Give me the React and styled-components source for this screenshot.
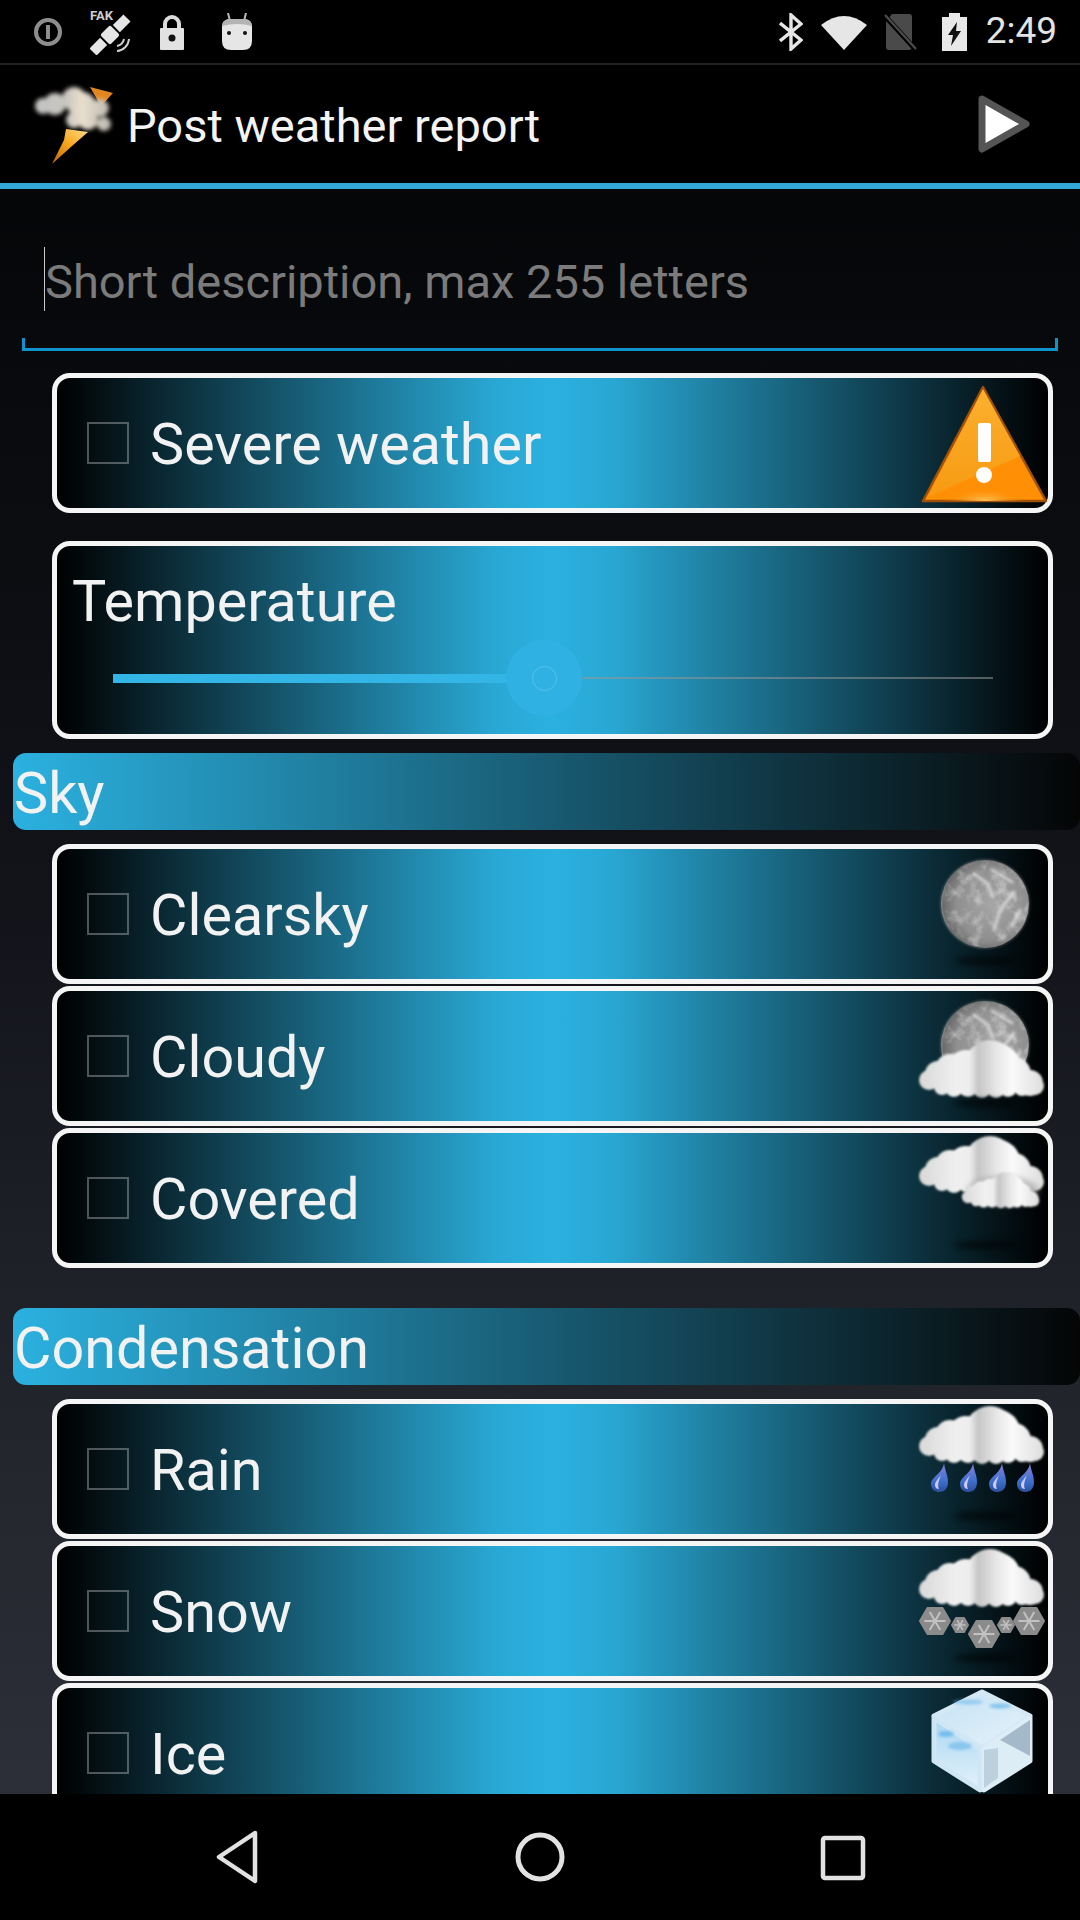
import React from "react";
import styled, { createGlobalStyle } from "styled-components";

const GlobalStyle = createGlobalStyle`
  html, body {
    margin: 0;
    padding: 0;
    background: #000;
  }
  * {
    box-sizing: border-box;
  }
`;

const Screen = styled.div`
  width: 1080px;
  height: 1920px;
  display: flex;
  flex-direction: column;
  overflow: hidden;
  background: #000;
  font-family: Roboto, "Liberation Sans", sans-serif;
  color: #f2f2f2;
`;

const StatusBar = styled.div`
  height: 65px;
  flex: none;
  display: flex;
  justify-content: space-between;
  align-items: flex-start;
  padding: 0 23px 0 33px;
  border-bottom: 2px solid #222;
`;

const StatusGroup = styled.div`
  display: flex;
  align-items: flex-start;
`;

const StatusSlot = styled.div`
  width: ${(p) => p.$w}px;
  height: 63px;
  display: flex;
  align-items: center;
`;

const Clock = styled.span`
  font-size: 37px;
  line-height: 62px;
  color: #e4e4e4;
`;

const AppBar = styled.div`
  height: 124px;
  flex: none;
  display: flex;
  align-items: center;
  padding: 0 48px 0 28px;
  border-bottom: 6px solid #34a7d9;
`;

const AppTitle = styled.h1`
  flex: 1;
  margin: 0 0 0 9px;
  padding-top: 3px;
  font-size: 47px;
  font-weight: 400;
  color: #f4f4f4;
`;

const Content = styled.div`
  flex: 1;
  min-height: 0;
  overflow: hidden;
  display: flex;
  flex-direction: column;
  background: linear-gradient(180deg, #050608 0%, #12141a 45%, #1f2228 70%, #2c2f38 100%);
`;

const DescriptionField = styled.div`
  height: 142px;
  flex: none;
  margin: 20px 22px 0;
  padding-left: 22px;
  display: flex;
  align-items: center;
  border-bottom: 3px solid #0e93cc;
  background: linear-gradient(#0e93cc, #0e93cc) left bottom / 3px 10px no-repeat,
    linear-gradient(#0e93cc, #0e93cc) right bottom / 3px 10px no-repeat;
`;

const Placeholder = styled.span`
  height: 64px;
  padding-top: 5px;
  display: flex;
  align-items: center;
  border-left: 1px solid #c8c8c8;
  font-size: 47px;
  color: #7b7b7b;
`;

const CardList = styled.div`
  display: flex;
  flex-direction: column;
  gap: 2px;
  margin: ${(p) => p.$top}px 27px 0 52px;
`;

const Card = styled.div`
  flex: none;
  height: ${(p) => p.$h || 140}px;
  display: flex;
  align-items: center;
  justify-content: space-between;
  padding-left: 30px;
  border: 5px solid #f5f5f5;
  border-radius: 18px;
  background: linear-gradient(90deg, #000 0%, #29a7d3 44%, #2bb1e0 50%, #29a7d3 56%, #000 100%);
`;

const TemperatureCard = styled(Card)`
  flex-direction: column;
  align-items: flex-start;
  justify-content: flex-start;
  padding: 20px 0 0 15px;
`;

const CheckRow = styled.label`
  display: flex;
  align-items: center;
  gap: 21px;
`;

const CheckBox = styled.span`
  width: 42px;
  height: 42px;
  flex: none;
  border: 2px solid rgba(255, 255, 255, 0.3);
`;

const CardLabel = styled.span`
  padding-top: 3px;
  font-size: 57.5px;
  line-height: 66px;
  color: #f2f2f2;
`;

const Slider = styled.div`
  position: relative;
  width: 880px;
  height: 76px;
  margin: 5px 0 0 41px;
  display: flex;
  align-items: center;
`;

const SliderFill = styled.div`
  width: ${(p) => p.$pct}%;
  height: 9px;
  flex: none;
  background: #33b5e5;
`;

const SliderRest = styled.div`
  flex: 1;
  height: 2px;
  background: rgba(150, 150, 150, 0.55);
`;

const SliderThumb = styled.div`
  position: absolute;
  left: ${(p) => p.$pct}%;
  top: 50%;
  width: 76px;
  height: 76px;
  transform: translate(-50%, -50%);
  display: flex;
  align-items: center;
  justify-content: center;
  border-radius: 50%;
  background: #2fb2e3;
`;

const ThumbCore = styled.div`
  width: 25px;
  height: 25px;
  border-radius: 50%;
  border: 1px solid rgba(255, 255, 255, 0.18);
`;

const SectionBar = styled.div`
  flex: none;
  height: 77px;
  margin: ${(p) => p.$top}px 0 0 13px;
  padding: 3px 0 0 1px;
  display: flex;
  align-items: center;
  border-radius: 13px;
  font-size: 57.5px;
  color: #f2f2f2;
  background: linear-gradient(90deg, #2bb1e0 0%, #050505 100%);
`;

const CardIcon = styled.svg`
  width: 140px;
  height: 130px;
  flex: none;
  overflow: visible;
`;

const NavBar = styled.div`
  height: 126px;
  flex: none;
  display: flex;
  justify-content: center;
  align-items: flex-start;
  gap: 243px;
  padding-top: 33px;
  background: #000;
`;

const NavIcon = styled.svg`
  width: 60px;
  height: 60px;
  display: block;
`;

const CLOUD_PUFFS = [
  [21, 42, 10], [30, 36, 13], [42, 31, 15], [58, 30, 18], [82, 27, 25], [88, 30, 25], [106, 36, 17],
  [122, 45, 13], [127, 48, 9], [34, 49, 8], [46, 50, 9], [60, 49, 10], [74, 51, 9], [88, 51, 9],
  [100, 50, 9], [114, 50, 8],
];

const IconDefs = () => (
  <defs>
    <filter id="soft" x="-20%" y="-20%" width="140%" height="140%">
      <feGaussianBlur stdDeviation="1.3" />
    </filter>
    <filter id="shadowBlur" x="-30%" y="-200%" width="160%" height="500%">
      <feGaussianBlur stdDeviation="3" />
    </filter>
    <filter id="blotch" x="-20%" y="-20%" width="140%" height="140%">
      <feGaussianBlur stdDeviation="1.4" />
    </filter>
    <filter id="moonTexture" x="0" y="0" width="100%" height="100%">
      <feTurbulence type="fractalNoise" baseFrequency="0.08" numOctaves="4" seed="7" />
      <feColorMatrix values="0 0 0 0 1  0 0 0 0 1  0 0 0 0 1  2.6 0 0 0 -1.2" />
      <feComposite in2="SourceGraphic" operator="in" />
    </filter>
    <linearGradient id="cloudFill" gradientUnits="userSpaceOnUse" x1="11" x2="137" y1="0" y2="0">
      <stop offset="0" stopColor="#d8d8d8" />
      <stop offset="0.3" stopColor="#f0f0f0" />
      <stop offset="0.4" stopColor="#eeeeee" />
      <stop offset="0.47" stopColor="#c6c6c6" />
      <stop offset="0.62" stopColor="#e8e8e8" />
      <stop offset="0.74" stopColor="#fafafa" />
      <stop offset="1" stopColor="#dcdcdc" />
    </linearGradient>
    <radialGradient id="moonFill" cx="0.58" cy="0.5" r="0.58">
      <stop offset="0" stopColor="#a6a6a6" />
      <stop offset="0.7" stopColor="#8f8f8f" />
      <stop offset="0.96" stopColor="#6a6a6a" />
      <stop offset="1" stopColor="#8e8e8e" />
    </radialGradient>
    <linearGradient id="dropFill" x1="0" y1="0" x2="0" y2="1">
      <stop offset="0" stopColor="#8d7fd6" />
      <stop offset="0.6" stopColor="#3f72cf" />
      <stop offset="1" stopColor="#2c4f9c" />
    </linearGradient>
    <linearGradient id="warnTop" x1="0" y1="0" x2="0" y2="1">
      <stop offset="0" stopColor="#fbb02f" />
      <stop offset="1" stopColor="#f79a12" />
    </linearGradient>
    <radialGradient id="warnGlow" cx="0.5" cy="1" r="0.5">
      <stop offset="0" stopColor="#ffc35a" />
      <stop offset="1" stopColor="#ff8a00" stopOpacity="0" />
    </radialGradient>
    <linearGradient id="iceLeft" x1="0" y1="0" x2="0" y2="1">
      <stop offset="0" stopColor="#a9d6f2" />
      <stop offset="1" stopColor="#e4f2fa" />
    </linearGradient>
    <linearGradient id="iceTop" x1="0" y1="0" x2="1" y2="1">
      <stop offset="0" stopColor="#c4e2f5" />
      <stop offset="1" stopColor="#e6f2f9" />
    </linearGradient>
  </defs>
);

const Cloud = ({ x = 0, y = 0, scale = 1 }) => (
  <g transform={`translate(${x} ${y}) scale(${scale})`} filter="url(#soft)">
    {CLOUD_PUFFS.map(([cx, cy, r]) => (
      <circle key={`${cx}-${cy}`} cx={cx} cy={cy} r={r} fill="url(#cloudFill)" />
    ))}
  </g>
);

const GroundShadow = () => (
  <ellipse cx="77" cy="112" rx="32" ry="4" fill="#000" opacity="0.6" filter="url(#shadowBlur)" />
);

const Moon = ({ cy = 55 }) => (
  <g>
    <circle cx="77" cy={cy} r="45" fill="#cfcfcf" opacity="0.25" filter="url(#soft)" />
    <circle cx="77" cy={cy} r="44" fill="url(#moonFill)" />
    <circle cx="77" cy={cy} r="43" fill="#fff" filter="url(#moonTexture)" opacity="0.4" />
    <g stroke="#e8e8e8" strokeWidth="3" strokeLinecap="round" fill="none" filter="url(#blotch)" opacity="0.75">
      <path d={`M66 ${cy - 30} L80 ${cy - 20} L84 ${cy - 8}`} />
      <path d={`M84 ${cy - 34} L104 ${cy - 22}`} />
      <path d={`M106 ${cy - 12} L92 ${cy + 6} L86 ${cy + 26}`} />
      <path d={`M112 ${cy + 6} L104 ${cy + 22}`} />
    </g>
  </g>
);

const Drop = ({ x }) => (
  <g transform={`translate(${x} 59)`}>
    <path d="M5 0 C4 10 -8 14 -8 21 C-8 27 -3 29 0 29 C6 29 9 25 9 19 C9 12 6 8 5 0 Z" fill="url(#dropFill)" />
    <path d="M2 12 C-1 16 -4 19 -4 22 C-4 25 -2 26 0 26 C-2 22 0 17 2 12 Z" fill="#cfc8fa" />
  </g>
);

const Flake = ({ cx, cy, r }) => {
  const hex = [0, 60, 120, 180, 240, 300].map((a) => {
    const rad = (a * Math.PI) / 180;
    return [cx + r * Math.cos(rad), cy + r * Math.sin(rad)];
  });
  return (
    <g>
      <polygon points={hex.map((p) => p.join(",")).join(" ")} fill="#8b8b8b" stroke="#8b8b8b" strokeWidth="2" strokeLinejoin="round" />
      {hex.map(([px, py]) => (
        <line
          key={`${px}-${py}`}
          x1={cx}
          y1={cy}
          x2={cx + (px - cx) * 0.7}
          y2={cy + (py - cy) * 0.7}
          stroke="#c2c2c2"
          strokeWidth={r > 10 ? 2 : 1.5}
        />
      ))}
    </g>
  );
};

const WarningIcon = () => (
  <CardIcon viewBox="0 0 140 130">
    <IconDefs />
    <path d="M75 9 L138 123 L15 123 Z" fill="#ff8f04" stroke="#a0500a" strokeWidth="2.5" strokeLinejoin="round" />
    <path d="M75 11 L112 78 L20 119 Z" fill="url(#warnTop)" />
    <path d="M35 123 L118 123 L104 96 L48 104 Z" fill="url(#warnGlow)" />
    <rect x="70" y="45" width="13" height="39" rx="2" fill="#fff" />
    <circle cx="76" cy="97" r="8" fill="#fff" />
  </CardIcon>
);

const ClearIcon = () => (
  <CardIcon viewBox="0 0 140 130">
    <IconDefs />
    <Moon />
    <GroundShadow />
  </CardIcon>
);

const CloudyIcon = () => (
  <CardIcon viewBox="0 0 140 130">
    <IconDefs />
    <Moon cy={54} />
    <Cloud y={47} />
    <GroundShadow />
  </CardIcon>
);

const CoveredIcon = () => (
  <CardIcon viewBox="0 0 140 130">
    <IconDefs />
    <Cloud y={1} />
    <ellipse cx="95" cy="58" rx="36" ry="14" fill="#8a8a8a" opacity="0.55" filter="url(#shadowBlur)" />
    <Cloud x={47} y={38} scale={0.62} />
    <GroundShadow />
  </CardIcon>
);

const RainIcon = () => (
  <CardIcon viewBox="0 0 140 130">
    <IconDefs />
    <Cloud />
    {[31, 60, 89, 117].map((x) => (
      <Drop key={x} x={x} />
    ))}
    <GroundShadow />
  </CardIcon>
);

const SnowIcon = () => (
  <CardIcon viewBox="0 0 140 130">
    <IconDefs />
    <Cloud y={1} />
    <Flake cx={27} cy={75} r={15} />
    <Flake cx={52} cy={79} r={8} />
    <Flake cx={76} cy={88} r={15} />
    <Flake cx={98} cy={79} r={8} />
    <Flake cx={121} cy={75} r={15} />
    <GroundShadow />
  </CardIcon>
);

const IceIcon = () => (
  <CardIcon viewBox="0 0 140 130">
    <IconDefs />
    <g strokeLinejoin="round" strokeWidth="5">
      <polygon points="74,4 122,28 74,60 26,28" fill="url(#iceTop)" stroke="#d4e8f5" />
      <polygon points="26,30 72,61 72,102 26,73" fill="url(#iceLeft)" stroke="#cfe6f5" />
      <polygon points="122,30 76,61 76,102 122,73" fill="#dcedf6" stroke="#dcedf6" />
    </g>
    <polygon points="122,32 92,52 122,68" fill="#a4b9c9" />
    <polygon points="76,62 76,100 90,90 90,60" fill="#bcd0de" />
    <g filter="url(#blotch)" fill="#63b4ea">
      <ellipse cx="38" cy="46" rx="8" ry="3" opacity="0.8" />
      <ellipse cx="52" cy="58" rx="12" ry="4" opacity="0.6" />
      <ellipse cx="92" cy="18" rx="11" ry="2.5" opacity="0.7" />
      <ellipse cx="60" cy="14" rx="15" ry="2.5" opacity="0.55" />
    </g>
  </CardIcon>
);

const InfoStatus = () => (
  <svg width="30" height="30" viewBox="0 0 30 30">
    <circle cx="15" cy="15" r="12" fill="none" stroke="#8e8e8e" strokeWidth="4" />
    <rect x="13" y="8" width="4" height="14" fill="#8e8e8e" />
  </svg>
);

const SatelliteStatus = () => (
  <svg width="46" height="46" viewBox="0 0 46 46">
    <text x="0" y="11" fontFamily="Roboto, sans-serif" fontSize="13" fontWeight="700" fill="#cfcfcf">FAK</text>
    <g fill="#e6e6e6" transform="rotate(-45 20 26)">
      <rect x="-4" y="21" width="15" height="10" />
      <rect x="13" y="19" width="14" height="14" rx="2" />
      <rect x="29" y="21" width="15" height="10" />
    </g>
    <path d="M27 42 A13 13 0 0 0 39 30 M27 37 A9 9 0 0 0 34 30" fill="none" stroke="#d0d0d0" strokeWidth="2" />
  </svg>
);

const LockStatus = () => (
  <svg width="24" height="36" viewBox="0 0 24 36">
    <path d="M5 15 V10 A7 7 0 0 1 19 10 V15" fill="none" stroke="#dcdcdc" strokeWidth="4" />
    <rect x="0" y="14" width="24" height="22" rx="1" fill="#e2e2e2" />
    <circle cx="12" cy="24" r="3.5" fill="#111" />
  </svg>
);

const AndroidStatus = () => (
  <svg width="30" height="38" viewBox="0 0 30 38">
    <path d="M6 0 L8 8 M24 0 L22 8" stroke="#b8b8b8" strokeWidth="2" />
    <path d="M7 6 H23 Q30 7 30 14 V28 Q30 37 21 37 H9 Q0 37 0 28 V14 Q0 7 7 6 Z" fill="#e6e6e6" />
    <path d="M7 6 H23 Q30 7 30 13 Q15 9 0 13 Q0 7 7 6 Z" fill="#b4b4b4" />
    <circle cx="7" cy="20" r="2" fill="#111" />
    <circle cx="23" cy="20" r="2" fill="#111" />
  </svg>
);

const BluetoothStatus = () => (
  <svg width="24" height="38" viewBox="0 0 24 38">
    <path d="M1 10 L22 27 L12 36 V2 L22 11 L1 28" fill="none" stroke="#e6e6e6" strokeWidth="3.4" />
  </svg>
);

const WifiStatus = () => (
  <svg width="46" height="36" viewBox="0 0 46 36">
    <path d="M0 11 Q23 -7 46 11 L23 36 Z" fill="#e6e6e6" />
  </svg>
);

const SimStatus = () => (
  <svg width="34" height="38" viewBox="0 0 34 38">
    <path d="M8 1 H25 Q28 1 28 4 V34 Q28 37 25 37 H5 Q2 37 2 34 V8 Z" fill="#4a4a4a" />
    <path d="M0 2 L33 38" stroke="#000" strokeWidth="5" />
    <path d="M1 2 L32 36" stroke="#4a4a4a" strokeWidth="2.4" />
  </svg>
);

const BatteryStatus = () => (
  <svg width="25" height="38" viewBox="0 0 25 38">
    <path d="M7 0 H18 V4 H25 V38 H0 V4 H7 Z" fill="#e8e8e8" />
    <path d="M15 9 L6 22 H11 L9 33 L19 18 H14 Z" fill="#111" />
  </svg>
);

const WeatherLogo = () => (
  <svg width="90" height="85" viewBox="0 0 90 85">
    <defs>
      <filter id="logoSoft" x="-10%" y="-10%" width="120%" height="120%">
        <feGaussianBlur stdDeviation="2" />
      </filter>
      <linearGradient id="boltFill" x1="1" y1="0" x2="0" y2="1">
        <stop offset="0" stopColor="#ffe08a" />
        <stop offset="0.5" stopColor="#f7a41c" />
        <stop offset="1" stopColor="#b8620e" />
      </linearGradient>
      <linearGradient id="logoCloud" gradientUnits="userSpaceOnUse" x1="6" x2="85" y1="0" y2="0">
        <stop offset="0" stopColor="#c4c4c4" />
        <stop offset="0.4" stopColor="#c8c5bf" />
        <stop offset="0.6" stopColor="#e9dfce" />
        <stop offset="1" stopColor="#bab6ae" />
      </linearGradient>
    </defs>
    <polygon points="62,5 85,11 73,24" fill="#e2861f" />
    <polygon points="38,47 60,50 44,64 24,82 36,58" fill="url(#boltFill)" />
    <g fill="url(#logoCloud)" filter="url(#logoSoft)">
      <circle cx="15" cy="24" r="8" />
      <circle cx="27" cy="22" r="11" />
      <circle cx="46" cy="17" r="12" />
      <circle cx="54" cy="24" r="14" />
      <circle cx="72" cy="26" r="9" />
      <circle cx="46" cy="38" r="8" />
      <circle cx="60" cy="38" r="10" />
      <circle cx="76" cy="42" r="7" />
    </g>
  </svg>
);

const PlayIcon = () => (
  <svg width="56" height="62" viewBox="0 0 56 62">
    <path d="M6 6 L50 31 L6 56 Z" fill="#fff" stroke="#555" strokeWidth="7" strokeLinejoin="round" />
  </svg>
);

const WeatherCard = ({ label, icon }) => (
  <Card>
    <CheckRow>
      <CheckBox />
      <CardLabel>{label}</CardLabel>
    </CheckRow>
    {icon}
  </Card>
);

export default function App() {
  const temperature = 49;

  return (
    <Screen>
      <GlobalStyle />
      <StatusBar>
        <StatusGroup>
          <StatusSlot $w={57}><InfoStatus /></StatusSlot>
          <StatusSlot $w={70}><SatelliteStatus /></StatusSlot>
          <StatusSlot $w={62}><LockStatus /></StatusSlot>
          <StatusSlot $w={30}><AndroidStatus /></StatusSlot>
        </StatusGroup>
        <StatusGroup>
          <StatusSlot $w={42}><BluetoothStatus /></StatusSlot>
          <StatusSlot $w={63}><WifiStatus /></StatusSlot>
          <StatusSlot $w={58}><SimStatus /></StatusSlot>
          <StatusSlot $w={44}><BatteryStatus /></StatusSlot>
          <Clock>2:49</Clock>
        </StatusGroup>
      </StatusBar>

      <AppBar>
        <WeatherLogo />
        <AppTitle>Post weather report</AppTitle>
        <PlayIcon />
      </AppBar>

      <Content>
        <DescriptionField>
          <Placeholder>Short description, max 255 letters</Placeholder>
        </DescriptionField>

        <CardList $top={22}>
          <WeatherCard label="Severe weather" icon={<WarningIcon />} />
        </CardList>

        <CardList $top={28}>
          <TemperatureCard $h={198}>
            <CardLabel>Temperature</CardLabel>
            <Slider>
              <SliderFill $pct={temperature} />
              <SliderRest />
              <SliderThumb $pct={temperature}>
                <ThumbCore />
              </SliderThumb>
            </Slider>
          </TemperatureCard>
        </CardList>

        <SectionBar $top={14}>Sky</SectionBar>
        <CardList $top={14}>
          <WeatherCard label="Clearsky" icon={<ClearIcon />} />
          <WeatherCard label="Cloudy" icon={<CloudyIcon />} />
          <WeatherCard label="Covered" icon={<CoveredIcon />} />
        </CardList>

        <SectionBar $top={40}>Condensation</SectionBar>
        <CardList $top={14}>
          <WeatherCard label="Rain" icon={<RainIcon />} />
          <WeatherCard label="Snow" icon={<SnowIcon />} />
          <WeatherCard label="Ice" icon={<IceIcon />} />
        </CardList>
      </Content>

      <NavBar>
        <NavIcon viewBox="0 0 60 60">
          <path d="M48 6 L12 30 L48 54 Z" fill="none" stroke="#e2e2e2" strokeWidth="4.5" strokeLinejoin="round" />
        </NavIcon>
        <NavIcon viewBox="0 0 60 60">
          <circle cx="30" cy="30" r="22" fill="none" stroke="#e2e2e2" strokeWidth="5" />
        </NavIcon>
        <NavIcon viewBox="0 0 60 60">
          <rect x="10" y="11" width="40" height="40" rx="2" fill="none" stroke="#e2e2e2" strokeWidth="4.5" />
        </NavIcon>
      </NavBar>
    </Screen>
  );
}
